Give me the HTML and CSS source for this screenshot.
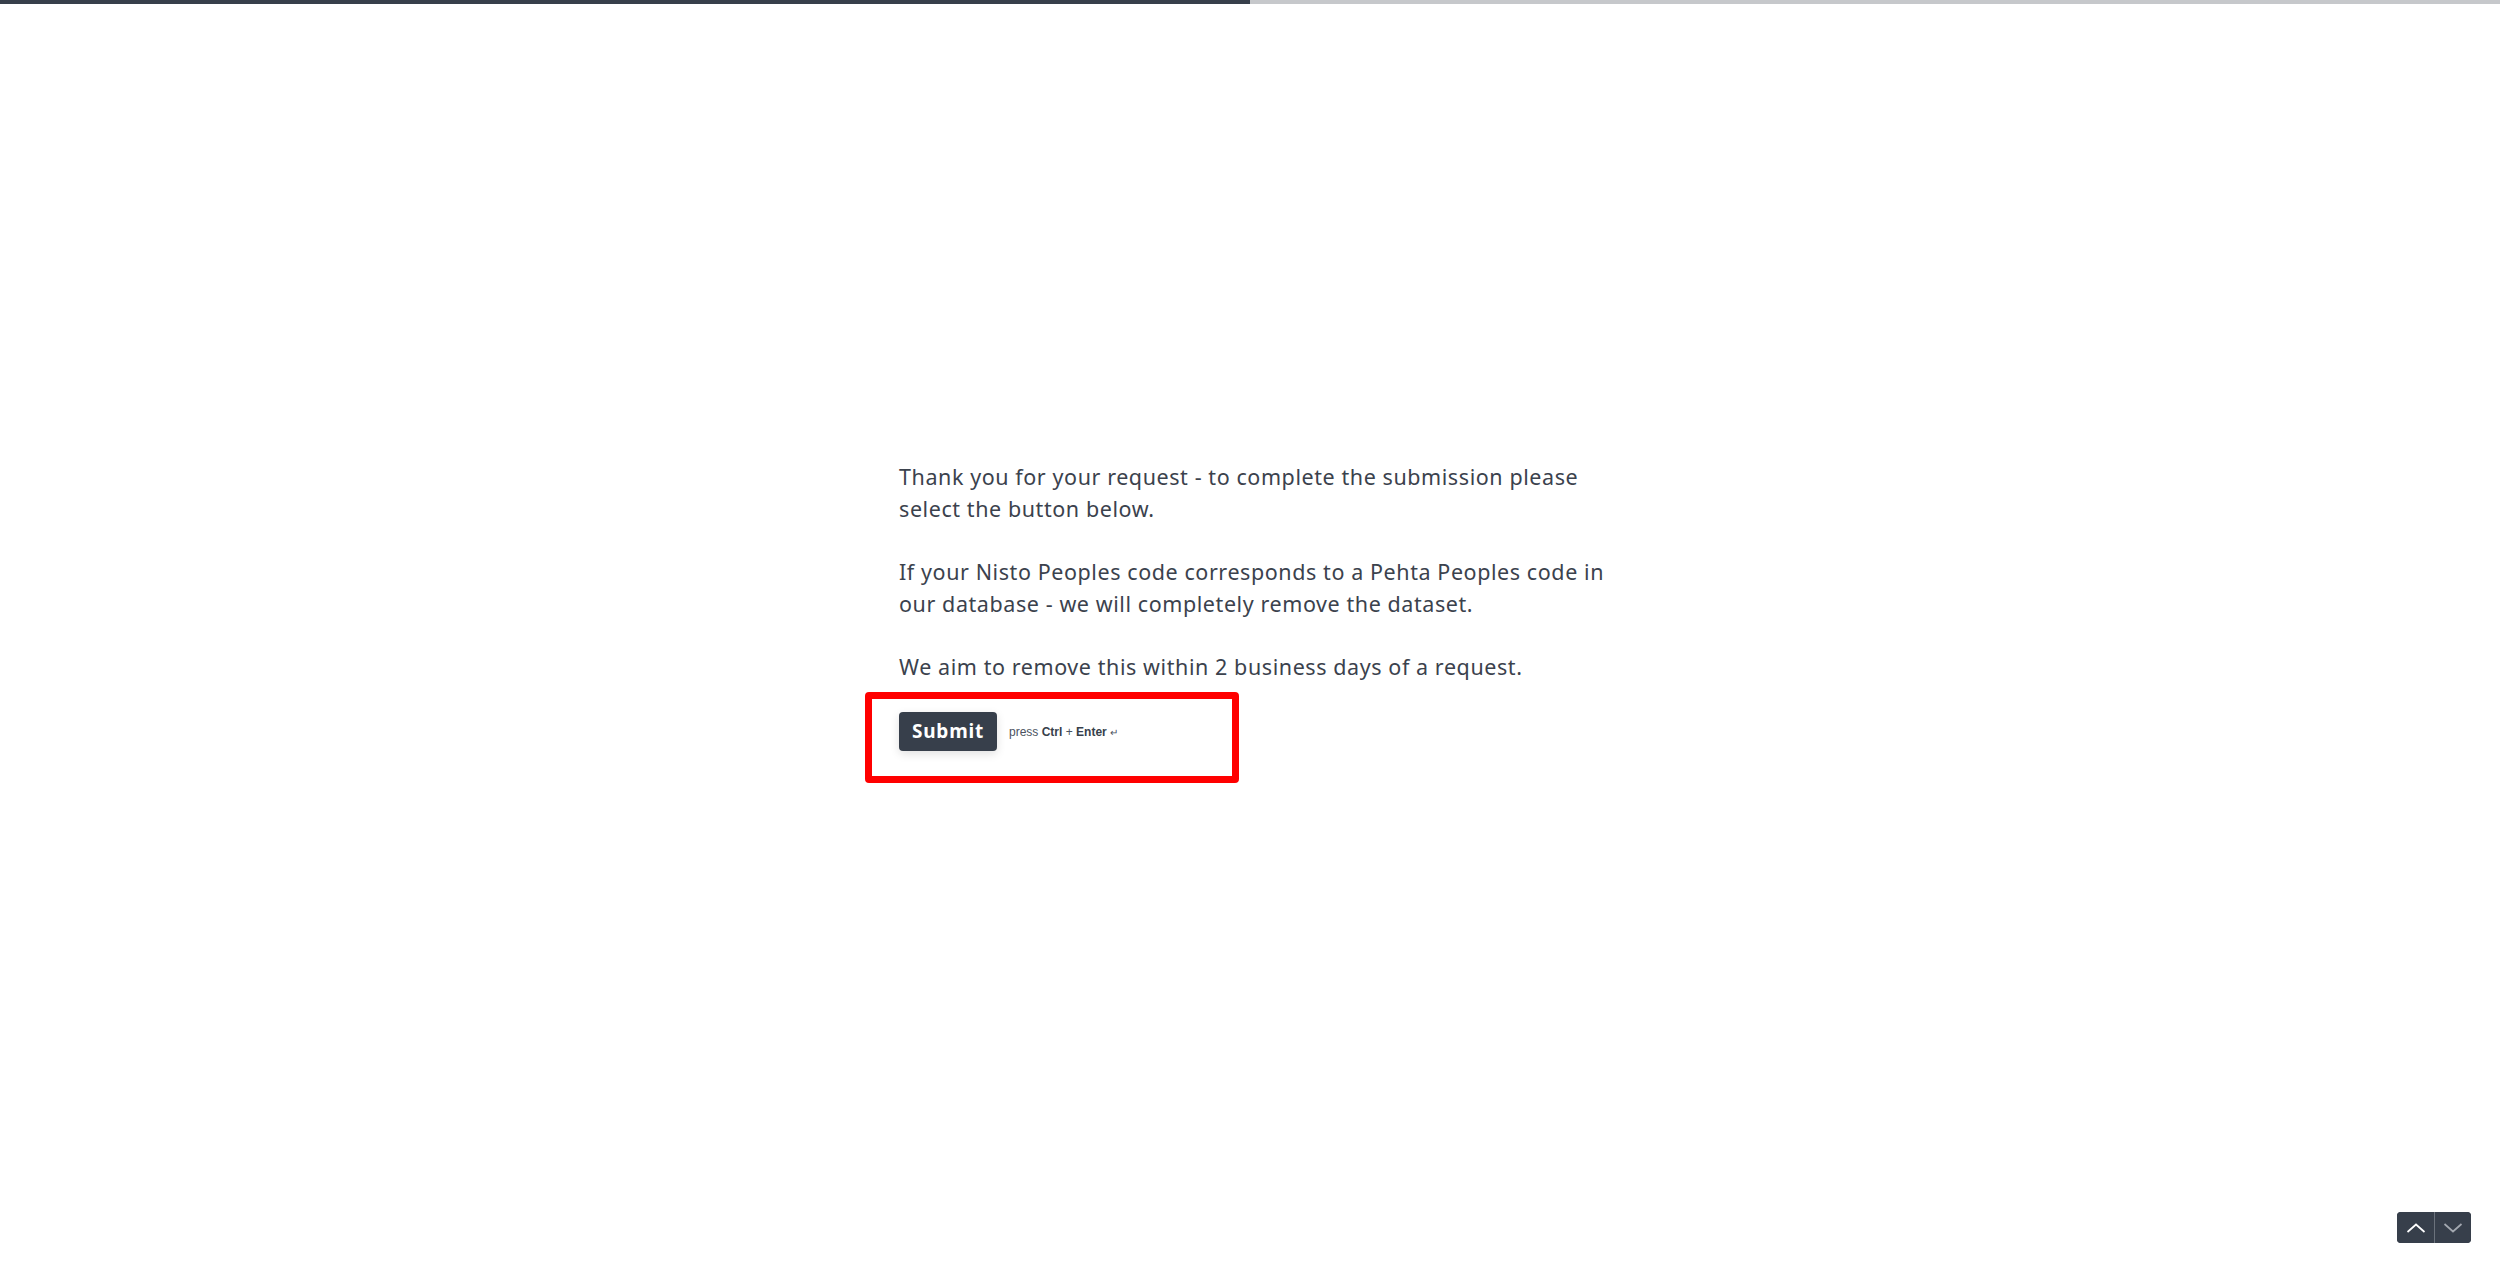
FILE: index.html
```html
<!DOCTYPE html>
<html lang="en">
<head>
<meta charset="utf-8">
<title>Request</title>
<link rel="stylesheet" href="styles.css">
</head>
<body>
<div class="progress"><div class="progress-fill"></div></div>
<main class="page">
  <section class="card">
    <p class="para">Thank you for your request - to complete the submission please select the button below.</p>
    <p class="para">If your Nisto Peoples code corresponds to a Pehta Peoples code in our database - we will completely remove the dataset.</p>
    <p class="para">We aim to remove this within 2 business days of a request.</p>
    <div class="actions">
      <button class="submit" type="button">Submit</button>
      <span class="hint">press <b>Ctrl</b> + <b>Enter</b> <span class="enter">&#8629;</span></span>
    </div>
  </section>
</main>
<nav class="nav">
  <button class="nav-btn" type="button" aria-label="Previous">
    <svg width="20" height="12" viewBox="0 0 20 12"><path d="M1.5 10 L10 2.5 L18.5 10" fill="none" stroke="#ffffff" stroke-width="1.7"/></svg>
  </button>
  <button class="nav-btn nav-btn-off" type="button" aria-label="Next">
    <svg width="20" height="12" viewBox="0 0 20 12"><path d="M1.5 2 L10 9.5 L18.5 2" fill="none" stroke="#a3a8b0" stroke-width="1.7"/></svg>
  </button>
</nav>
</body>
</html>
```

FILE: styles.css
```css
html, body {
  margin: 0;
  padding: 0;
  background: #ffffff;
  height: 100%;
}
body {
  font-family: "Noto Sans", "Open Sans", sans-serif;
  color: #3b424d;
  overflow: hidden;
}
.progress {
  height: 4px;
  background: #c6c8cb;
  display: flex;
}
.progress-fill {
  width: 50%;
  background: #373f4b;
}
.page {
  display: flex;
  justify-content: center;
  padding-top: 457px;
}
.card {
  width: 712px;
  margin-left: 10px;
}
.para {
  margin: 0 0 32px 0;
  font-size: 21.5px;
  letter-spacing: 0.58px;
  line-height: 31.5px;
}
.para:last-of-type {
  margin-bottom: 29px;
}
.actions {
  position: relative;
  display: flex;
  align-items: center;
  gap: 12px;
}
.actions::before {
  content: "";
  position: absolute;
  left: -34px;
  top: -20px;
  width: 360px;
  height: 77px;
  border: 7px solid #ff0000;
  border-radius: 4px;
}
.submit {
  font-family: "Noto Sans", sans-serif;
  font-weight: 700;
  font-size: 19px;
  letter-spacing: 0.8px;
  color: #ffffff;
  background: #373f4b;
  border: none;
  border-radius: 4px;
  width: 98px;
  height: 39px;
  padding: 0;
  box-shadow: 0 3px 10px rgba(0, 0, 0, 0.12);
}
.hint {
  font-family: "Liberation Sans", Arial, sans-serif;
  font-size: 12px;
  color: #4b5260;
  margin-top: 2px;
}
.hint b {
  color: #373f4b;
}
.enter {
  font-size: 10px;
}
.nav {
  position: fixed;
  right: 29px;
  bottom: 32px;
  display: flex;
  background: #373f4b;
  border-radius: 4px;
  overflow: hidden;
}
.nav-btn {
  width: 37px;
  height: 31px;
  border: none;
  background: #373f4b;
  padding: 0;
  display: flex;
  align-items: center;
  justify-content: center;
}
.nav-btn + .nav-btn {
  border-left: 1px solid #6b727c;
}
```
